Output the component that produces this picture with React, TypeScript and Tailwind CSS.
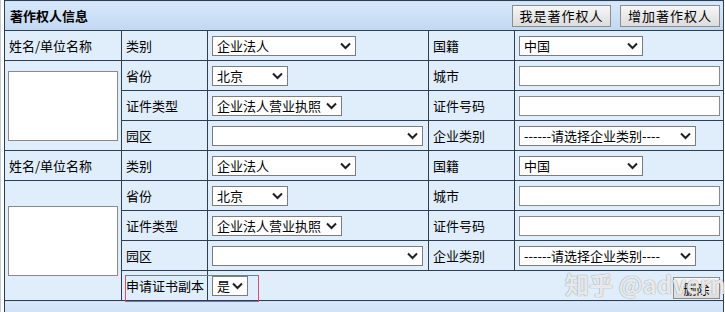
import type { ReactNode } from 'react'

const BORDER = 'border border-[#2e3f52]';
const LABEL = `${BORDER} bg-[#e0eefb] pl-[4px] text-[13px] text-black whitespace-nowrap`;
const FIELD = `${BORDER} bg-[#e0eefb] pl-[4px] pr-[3px]`;

function Chevron() {
  return (
    <svg width="11" height="8" viewBox="0 0 11 8" className="shrink-0">
      <path d="M1 1.5 L5.5 6 L10 1.5" fill="none" stroke="#1f1f1f" strokeWidth="2" />
    </svg>
  );
}

function Select({ value, width }: { value: string; width: number }) {
  return (
    <div
      className="h-[20px] flex items-center justify-between bg-white border border-[#7c7c7c] pl-[4px] pr-[4px] text-[13px] text-black leading-none"
      style={{ width }}
    >
      <span className="whitespace-nowrap">{value}</span>
      <Chevron />
    </div>
  );
}

function Input() {
  return <div className="h-[20px] w-[201px] bg-white border border-[#8a8a8a]" />;
}

function Button({ children, className = '' }: { children: ReactNode; className?: string }) {
  return (
    <button
      className={`h-[22px] border border-[#8d8d8d] bg-linear-to-b from-[#f7f7f7] to-[#dcdcdc] text-[13px] text-black leading-none ${className}`}
    >
      {children}
    </button>
  );
}

function Block({ last }: { last?: boolean }) {
  return (
    <>
      <tr className="h-[30px]">
        <td className={LABEL}>姓名/单位名称</td>
        <td className={LABEL}>类别</td>
        <td className={FIELD}><Select value="企业法人" width={144} /></td>
        <td className={LABEL}>国籍</td>
        <td className={FIELD}><Select value="中国" width={124} /></td>
      </tr>
      <tr className="h-[30px]">
        <td rowSpan={last ? 4 : 3} className={`${BORDER} bg-[#e0eefb] align-middle pl-[3px]`}>
          <div className="w-[110px] h-[70px] bg-white border border-[#8a8a8a]" />
        </td>
        <td className={LABEL}>省份</td>
        <td className={FIELD}><Select value="北京" width={76} /></td>
        <td className={LABEL}>城市</td>
        <td className={FIELD}><Input /></td>
      </tr>
      <tr className="h-[30px]">
        <td className={LABEL}>证件类型</td>
        <td className={FIELD}><Select value="企业法人营业执照" width={130} /></td>
        <td className={LABEL}>证件号码</td>
        <td className={FIELD}><Input /></td>
      </tr>
      <tr className="h-[30px]">
        <td className={LABEL}>园区</td>
        <td className={FIELD}><Select value="" width={211} /></td>
        <td className={LABEL}>企业类别</td>
        <td className={FIELD}><Select value="------请选择企业类别----" width={177} /></td>
      </tr>
      {last && (
        <tr className="h-[30px]">
          <td className={LABEL}>申请证书副本</td>
          <td colSpan={3} className={FIELD}>
            <div className="flex items-center justify-between">
              <Select value="是" width={36} />
              <Button className="w-[47px] mt-[5px]">删除</Button>
            </div>
          </td>
        </tr>
      )}
    </>
  );
}

export default function App() {
  return (
    <div className="relative w-[725px] h-[312px] overflow-hidden bg-white border-l border-[#c3ccd6] font-['Noto_Sans_CJK_SC','Liberation_Sans',sans-serif]">
      <table className="ml-[3px] w-[719px] table-fixed border-collapse">
        <colgroup>
          <col className="w-[117px]" />
          <col className="w-[86px]" />
          <col className="w-[221px]" />
          <col className="w-[86px]" />
          <col className="w-[209px]" />
        </colgroup>
        <tbody>
          <tr className="h-[30px]">
            <td colSpan={5} className={`${BORDER} bg-linear-to-b from-[#d8e8fa] to-[#c1d8f3] pl-[5px] pr-[3px]`}>
              <div className="flex items-center justify-between">
                <span className="text-[13px] font-bold text-black">著作权人信息</span>
                <div className="flex gap-[9px]">
                  <Button className="w-[99px] tracking-[1px]">我是著作权人</Button>
                  <Button className="w-[100px] tracking-[1px]">增加著作权人</Button>
                </div>
              </div>
            </td>
          </tr>
          <Block />
          <Block last />
          <tr className="h-[30px]">
            <td colSpan={5} className={`${BORDER} bg-linear-to-b from-[#d8e8fa] to-[#c1d8f3] pl-[5px] align-top pt-[4px]`}>
              <span className="text-[13px] font-bold text-black">法定代理人信息</span>
            </td>
          </tr>
        </tbody>
      </table>

      <div className="absolute z-10 left-[124px] top-[275px] w-[134px] h-[27px] border border-[#d9506f] pointer-events-none" />
      <div className="absolute z-10 left-[564px] top-[272px] font-['Noto_Sans_CJK_SC','Liberation_Sans',sans-serif] font-bold text-[24px] leading-none whitespace-nowrap text-white/85 pointer-events-none [text-shadow:0_0_1px_rgba(40,40,40,0.7)]">
        知乎 @advern
      </div>
    </div>
  );
}
